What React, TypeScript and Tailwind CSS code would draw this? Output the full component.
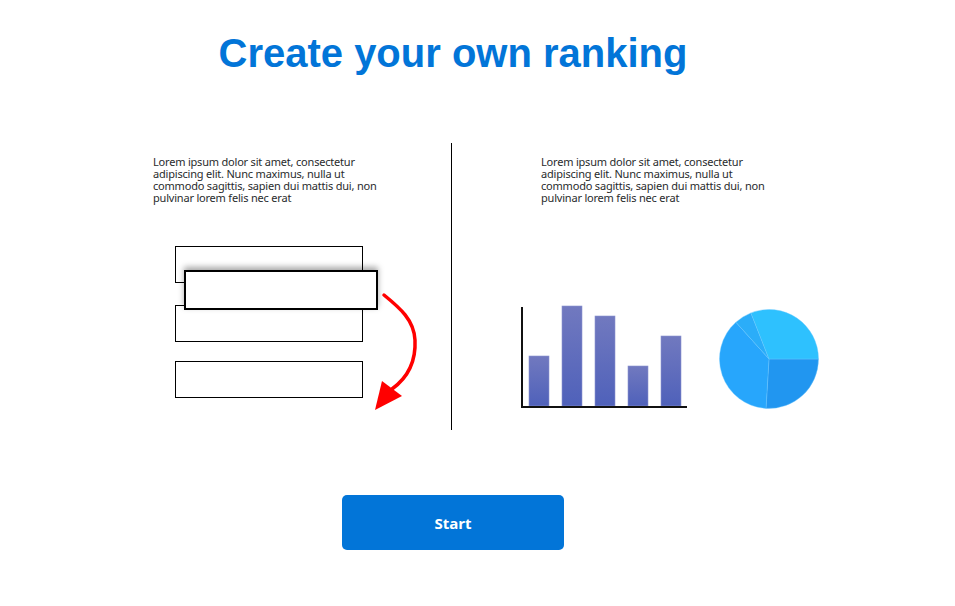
import React from "react";

const Blurb = () => (
  <p className="whitespace-nowrap text-[11px] leading-[12px] tracking-[-0.2px] text-[#292b2c] font-['Noto_Sans',sans-serif]">
    Lorem ipsum dolor sit amet, consectetur
    <br />
    adipiscing elit. Nunc maximus, nulla ut
    <br />
    commodo sagittis, sapien dui mattis dui, non
    <br />
    pulvinar lorem felis nec erat
  </p>
);

// drag & drop list illustration
const RankingSketch = () => (
  <div className="relative ml-[22px] mt-[42px] w-[188px]">
    <div className="h-[37px] border border-black bg-white" />
    <div className="mt-[22px] h-[37px] border border-black bg-white" />
    <div className="mt-[19px] h-[37px] border border-black bg-white" />

    {/* item being dragged */}
    <div className="absolute left-[9px] top-[24px] h-[40px] w-[194px] border-2 border-black bg-white shadow-[0_-3px_6px_rgba(0,0,0,0.35)]" />

    <svg className="absolute left-[195px] top-[44px]" width="50" height="125" viewBox="0 0 50 125">
      <path
        d="M14 5 C30 18, 44 30, 45 50 C46 70, 40 86, 22 99"
        fill="none"
        stroke="#ff0000"
        strokeWidth="3.5"
        strokeLinecap="round"
      />
      <polygon points="5,120 12,91 32,106" fill="#ff0000" />
    </svg>
  </div>
);

const bars = [
  { x: 9, top: 51 },
  { x: 42, top: 1 },
  { x: 75, top: 11 },
  { x: 108, top: 61 },
  { x: 141, top: 31 },
];

const BarChart = () => (
  <svg width="168" height="105" viewBox="0 0 168 105">
    <defs>
      <linearGradient id="barFill" x1="0" y1="0" x2="0" y2="1">
        <stop offset="0" stopColor="#7179bf" />
        <stop offset="1" stopColor="#4f61ba" />
      </linearGradient>
    </defs>
    {bars.map((b) => (
      <rect
        key={b.x}
        x={b.x}
        y={b.top}
        width="20"
        height={101 - b.top}
        fill="url(#barFill)"
        stroke="#8d94d0"
        strokeWidth="0.6"
      />
    ))}
    <path d="M2 2 L2 103 M1 102 L167 102" stroke="#111" strokeWidth="2" fill="none" />
  </svg>
);

const PieChart = () => (
  <svg width="100" height="100" viewBox="0 0 100 100">
    <g stroke="#6cc8ff" strokeWidth="0.4">
      <path d="M50 50 L99.5 50 A49.5 49.5 0 0 1 47 99.4 Z" fill="#2196f0" />
      <path d="M50 50 L47 99.4 A49.5 49.5 0 0 1 16.9 13.2 Z" fill="#27a6fc" />
      <path d="M50 50 L16.9 13.2 A49.5 49.5 0 0 1 31.9 3.9 Z" fill="#2badf9" />
      <path d="M50 50 L31.9 3.9 A49.5 49.5 0 0 1 99.5 50 Z" fill="#2ec1fe" />
    </g>
  </svg>
);

export default function App() {
  return (
    <div className="min-h-screen bg-white">
      <div className="flex w-[906px] flex-col items-center">
        <h1 className="mt-[33px] text-[40px] leading-[40px] font-bold text-[#0275d8] font-['Liberation_Sans',Arial,sans-serif]">
          Create your own ranking
        </h1>

        <div className="mt-[70px] flex w-full">
          <div className="w-[451px] pl-[153px] pt-[13px]">
            <Blurb />
            <RankingSketch />
          </div>

          <div className="h-[287px] w-px bg-black" />

          <div className="flex-1 pt-[13px]">
            <div className="ml-[89px]">
              <Blurb />
            </div>
            <div className="ml-[68px] mt-[101px] flex items-start gap-[31px]">
              <BarChart />
              <div className="mt-[4px]">
                <PieChart />
              </div>
            </div>
          </div>
        </div>

        <button className="mt-[65px] h-[55px] w-[222px] rounded-[5px] bg-[#0275d8] pt-[2px] text-[15px] font-bold text-white font-['Open_Sans',sans-serif]">
          Start
        </button>
      </div>
    </div>
  );
}
